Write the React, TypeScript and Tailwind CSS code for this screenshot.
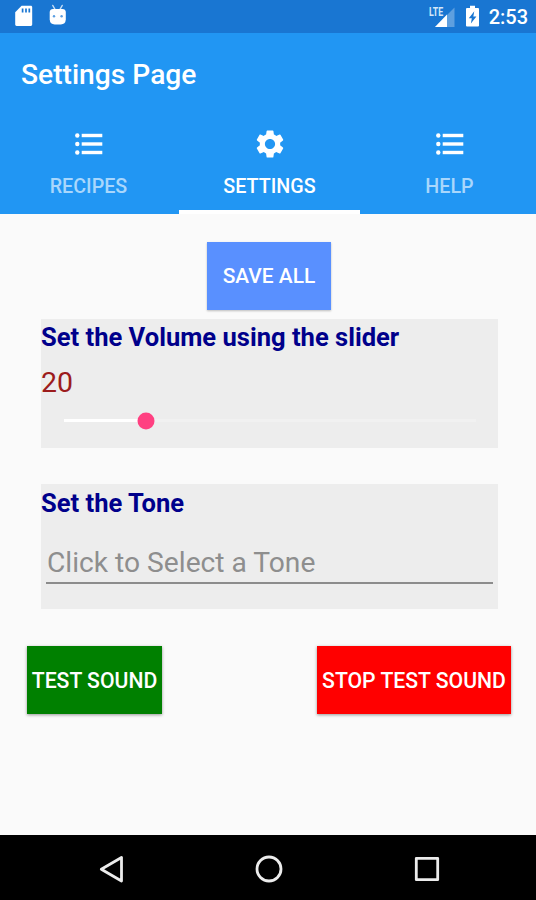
import React from 'react';
import { MdSettings } from 'react-icons/md';
import clsx from 'clsx';

const VOLUME = 20;

function ListIcon() {
    return (
        <svg viewBox="0 0 28 22" className="h-[22px] w-7" fill="currentColor" aria-hidden>
            {[2.5, 11, 19.5].map((y) => (
                <g key={y}>
                    <circle cx="2.3" cy={y} r="2.2" />
                    <rect x="6.7" y={y - 1.7} width="20.6" height="3.4" />
                </g>
            ))}
        </svg>
    );
}

function StatusBar() {
    return (
        <div className="flex h-[33px] shrink-0 items-start bg-[#1976d2] text-white">
            <svg viewBox="0 0 18 22" className="mt-[5px] ml-[15px] h-[22px] w-[18px]" aria-hidden>
                <path fill="#fff" d="M6.6.8h9.2c.8 0 1.4.6 1.4 1.4v17.4c0 .8-.6 1.4-1.4 1.4H1.6C.8 21 .2 20.4.2 19.6V7.2z" />
                <path stroke="#1976d2" strokeWidth="1.7" d="M7.6 3.6v4M11 3.6v4M14.3 3.6v4" />
            </svg>
            <svg viewBox="0 0 18 22" className="mt-1 ml-4 h-[22px] w-[18px]" aria-hidden>
                <path stroke="#c5ddf5" strokeWidth="1.5" strokeLinecap="round" d="M3.8 1.5l2 3.5M13.2 1.5l-2 3.5" />
                <path fill="#fff" d="M.7 8Q1 5.100 4 5h9.500q3 .1 3.300 3v7.500q-.3 4.800-5 5H5.700q-4.700-.2-5-5z" />
                <circle cx="5" cy="12.3" r="1.2" fill="#5a9ee2" />
                <circle cx="12.6" cy="12.3" r="1.2" fill="#5a9ee2" />
            </svg>
            <div className="relative mt-1.5 ml-auto h-[22px] w-[26px]">
                <svg viewBox="0 0 26 22" className="h-[22px] w-[26px]" aria-hidden>
                    <path fill="#fff" fillOpacity=".3" d="M25.5 1.5V21H6z" />
                    <path fill="#fff" d="M18 8.5V21H6z" />
                </svg>
                <span className="absolute -top-px left-0 origin-left scale-x-70 text-[12.5px] leading-[13px] font-bold text-[#d5e7f8]">LTE</span>
            </div>
            <svg viewBox="0 0 15 22" className="mt-[5px] ml-2.5 h-[22px] w-[15px]" aria-hidden>
                <path fill="#fff" d="M5 .7h5v2.2h3q1 0 1 1v16.6q0 1-1 1H2q-1 0-1-1V3.9q0-1 1-1h3z" />
                <path fill="#1976d2" d="M9.3 6.3L3.8 13.2h3l-.9 5.3 5.5-7.1H8.3z" />
            </svg>
            <span className="mt-[5px] mr-2 ml-[9px] text-[20px] leading-[24px] font-medium">2:53</span>
        </div>
    );
}

interface TabProps {
    label: string;
    icon: React.ReactNode;
    active?: boolean;
}

function Tab({ label, icon, active }: TabProps) {
    return (
        <button
            type="button"
            className={clsx('flex flex-col items-center border-b-4', active ? 'border-white' : 'border-transparent')}
        >
            <span className="mt-[13px] flex h-9 items-center text-white">{icon}</span>
            <span className={clsx('mt-[13px] text-[19.7px] leading-6 font-medium', active ? 'text-white' : 'text-[#a9d7fc]')}>
                {label}
            </span>
        </button>
    );
}

export default function App() {
    return (
        <div className="flex h-[900px] w-[536px] flex-col overflow-hidden bg-[#fafafa] font-['Roboto',sans-serif]">
            <StatusBar />
            <header className="flex h-[181px] shrink-0 flex-col bg-[#2196f3]">
                <h1 className="mt-[25px] ml-[21px] text-[28.2px] leading-[34px] font-medium text-white">Settings Page</h1>
                <nav className="mt-auto -ml-0.5 grid h-[101px] grid-cols-[181px_181px_179px]">
                    <Tab label="RECIPES" icon={<ListIcon />} />
                    <Tab label="SETTINGS" icon={<MdSettings className="size-[34px]" />} active />
                    <Tab label="HELP" icon={<ListIcon />} />
                </nav>
            </header>

            <main className="flex flex-1 flex-col">
                <button
                    type="button"
                    className="mt-7 ml-0.5 h-[68px] w-[124px] self-center bg-[#5990ff] pt-0.5 text-[20.9px] font-medium text-white shadow-[0_1px_2px_rgba(0,0,0,0.25)]"
                >
                    SAVE ALL
                </button>

                <section className="mt-[9px] mr-[38px] ml-[41px] h-[129px] bg-[#ededed]">
                    <h2 className="pt-0.5 text-[25.55px] leading-[33px] font-bold text-[#00008b]">Set the Volume using the slider</h2>
                    <p className="mt-3 text-[28.5px] leading-[34px] text-[#9c1c1c]">{VOLUME}</p>
                    <div className="relative mt-[19px] mr-[22px] ml-[23px] h-[3px] bg-[#f1f1f1]">
                        <div className="h-full bg-white" style={{ width: `${VOLUME}%` }} />
                        <div
                            className="absolute top-1/2 size-[17px] -translate-1/2 rounded-full bg-[#ff4081]"
                            style={{ left: `${VOLUME}%` }}
                        />
                    </div>
                </section>

                <section className="mt-9 mr-[38px] ml-[41px] h-[125px] bg-[#ededed]">
                    <h2 className="pt-[3px] text-[25.55px] leading-[33px] font-bold text-[#00008b]">Set the Tone</h2>
                    <div className="mx-[5px] mt-[25px] h-[39px] border-b-2 border-[#8c8c8c] pl-px text-[28.2px] leading-[36px] text-[#8e8e8e]">
                        Click to Select a Tone
                    </div>
                </section>

                <div className="mt-[37px] mr-[25px] ml-[27px] flex h-[68px] justify-between text-[21.2px] font-medium text-white">
                    <button type="button" className="w-[135px] bg-[#008000] pt-0.5 whitespace-nowrap shadow-[0_1px_3px_rgba(0,0,0,0.4)]">
                        TEST SOUND
                    </button>
                    <button type="button" className="w-[194px] bg-[#ff0000] pt-0.5 whitespace-nowrap shadow-[0_1px_3px_rgba(0,0,0,0.4)]">
                        STOP TEST SOUND
                    </button>
                </div>
            </main>

            <footer className="flex h-[65px] shrink-0 items-center bg-black pt-0.5 pl-[98px]">
                <svg viewBox="0 0 28 30" className="h-[30px] w-7" fill="none" stroke="#ececec" strokeWidth="2.8" strokeLinejoin="round" aria-hidden>
                    <path d="M23.5 3.5v23.5L3.3 15.2z" />
                </svg>
                <svg viewBox="0 0 30 30" className="ml-32 size-[30px]" fill="none" stroke="#ececec" strokeWidth="2.8" aria-hidden>
                    <circle cx="15" cy="15" r="12" />
                </svg>
                <svg viewBox="0 0 28 28" className="ml-[129px] size-7" fill="none" stroke="#ececec" strokeWidth="2.8" strokeLinejoin="round" aria-hidden>
                    <rect x="3.3" y="3.3" width="21.4" height="21.4" />
                </svg>
            </footer>
        </div>
    );
}
